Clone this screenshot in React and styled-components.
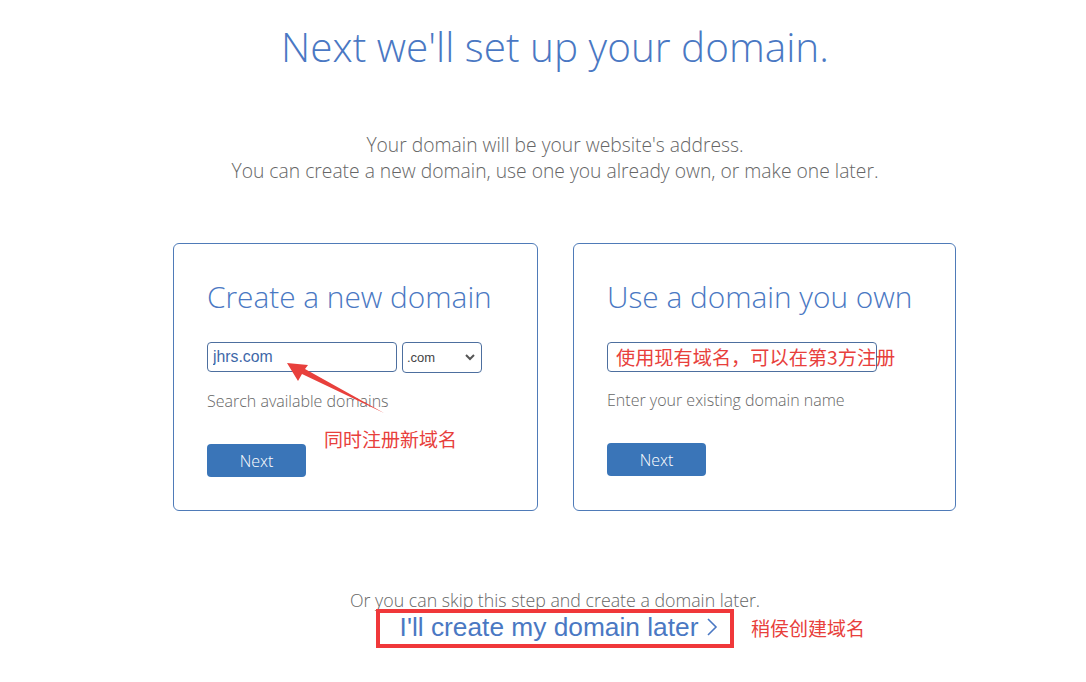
import React from 'react';
import styled, { createGlobalStyle } from 'styled-components';

const GlobalStyle = createGlobalStyle`
  html, body {
    margin: 0;
    padding: 0;
    background: #fff;
  }
  body {
    font-family: "Open Sans", "Liberation Sans", Arial, sans-serif;
    color: #666;
  }
  * {
    box-sizing: border-box;
  }
`;

const Page = styled.div`
  position: relative;
  width: 1086px;
  height: 682px;
  overflow: hidden;
  padding-left: 24px;
`;

const Title = styled.h1`
  margin: 23px 0 0;
  font-size: 40.5px;
  line-height: 48px;
  font-weight: 300;
  color: #4a78c3;
  text-align: center;
`;

const Intro = styled.p`
  margin: 61px 0 0;
  font-size: 19.3px;
  line-height: 26px;
  font-weight: 300;
  color: #666;
  text-align: center;
`;

const Cards = styled.div`
  display: flex;
  gap: 35px;
  margin: 59px 0 0 149px;
`;

const Card = styled.div`
  width: ${(p) => p.$width}px;
  height: 268px;
  border: 1px solid #4f7bb8;
  border-radius: 6px;
  padding: 34px 33px 0;
`;

const CardTitle = styled.h2`
  margin: 0;
  font-size: 29.8px;
  line-height: 38px;
  font-weight: 300;
  color: #4a78c3;
  white-space: nowrap;
`;

const FieldRow = styled.div`
  display: flex;
  align-items: flex-start;
  gap: 5px;
  margin-top: 26px;
`;

const TextInput = styled.input`
  width: ${(p) => p.$width}px;
  height: 30px;
  border: 1px solid #4d6f9f;
  border-radius: 4px;
  padding: 0 5px;
  font-family: "Liberation Sans", Arial, sans-serif;
  font-size: 15.8px;
  color: #3e67a8;
  outline: none;
  background: #fff;
`;

const SelectBox = styled.div`
  width: 80px;
  height: 31px;
  border: 1px solid #4d6f9f;
  border-radius: 4px;
  display: flex;
  align-items: center;
  justify-content: space-between;
  padding: 0 6px 0 4px;
  font-family: "Liberation Sans", Arial, sans-serif;
  font-size: 13px;
  color: #444;
`;

const Hint = styled.div`
  margin-top: 17px;
  font-size: 16px;
  line-height: 22px;
  font-weight: 300;
  color: #666;
`;

const NextButton = styled.button`
  display: block;
  margin-top: 32px;
  width: 99px;
  height: 33px;
  border: none;
  border-radius: 4px;
  background: #3a75b8;
  color: #fff;
  font-family: "Open Sans", sans-serif;
  font-size: 16px;
  font-weight: 300;
  cursor: pointer;
`;

const Skip = styled.div`
  margin-top: 78px;
  text-align: center;
  font-size: 17.8px;
  line-height: 22px;
  font-weight: 300;
  color: #666;
`;

const LaterLink = styled.a`
  display: flex;
  align-items: center;
  justify-content: center;
  gap: 8px;
  margin-top: 0;
  padding-left: 8px;
  font-family: "Liberation Sans", Arial, sans-serif;
  font-size: 26.3px;
  line-height: 32px;
  color: #4a78c3;
  text-decoration: none;
  cursor: pointer;
`;

const Note = styled.div`
  position: absolute;
  left: ${(p) => p.$x}px;
  top: ${(p) => p.$y}px;
  font-family: "Noto Sans CJK SC", "Noto Sans", sans-serif;
  font-size: ${(p) => p.$size || 19}px;
  line-height: 24px;
  color: #e8403c;
  white-space: nowrap;
  pointer-events: none;
`;

const Frame = styled.div`
  position: absolute;
  left: 376px;
  top: 609px;
  width: 358px;
  height: 39px;
  border: 4px solid #f0383a;
  pointer-events: none;
`;

const Overlay = styled.svg`
  position: absolute;
  left: 0;
  top: 0;
  pointer-events: none;
`;

const Chevron = () => (
  <svg width="12" height="20" viewBox="0 0 12 20" fill="none">
    <polyline points="2,2 10,10 2,18" stroke="#4a78c3" strokeWidth="1.6" />
  </svg>
);

const SelectArrow = () => (
  <svg width="10" height="7" viewBox="0 0 10 7" fill="none">
    <polyline points="1,1 5,5 9,1" stroke="#555" strokeWidth="2" />
  </svg>
);

const App = () => (
  <>
    <GlobalStyle />
    <Page>
      <Title>Next we'll set up your domain.</Title>
      <Intro>
        Your domain will be your website's address.
        <br />
        You can create a new domain, use one you already own, or make one later.
      </Intro>

      <Cards>
        <Card $width={365}>
          <CardTitle>Create a new domain</CardTitle>
          <FieldRow>
            <TextInput $width={190} defaultValue="jhrs.com" />
            <SelectBox>
              <span>.com</span>
              <SelectArrow />
            </SelectBox>
          </FieldRow>
          <Hint>Search available domains</Hint>
          <NextButton>Next</NextButton>
        </Card>

        <Card $width={383}>
          <CardTitle>Use a domain you own</CardTitle>
          <FieldRow>
            <TextInput $width={270} />
          </FieldRow>
          <Hint>Enter your existing domain name</Hint>
          <NextButton>Next</NextButton>
        </Card>
      </Cards>

      <Skip>Or you can skip this step and create a domain later.</Skip>
      <LaterLink>
        I'll create my domain later
        <Chevron />
      </LaterLink>

      <Overlay width="1086" height="682" viewBox="0 0 1086 682">
        <polygon
          points="287,363 308,365 305,369 384,413 302,374 298,381"
          fill="#e8403c"
        />
      </Overlay>
      <Note $x={324} $y={427}>同时注册新域名</Note>
      <Note $x={616} $y={345} $size={19.2}>使用现有域名，可以在第3方注册</Note>
      <Note $x={751} $y={616}>稍侯创建域名</Note>
      <Frame />
    </Page>
  </>
);

export default App;
